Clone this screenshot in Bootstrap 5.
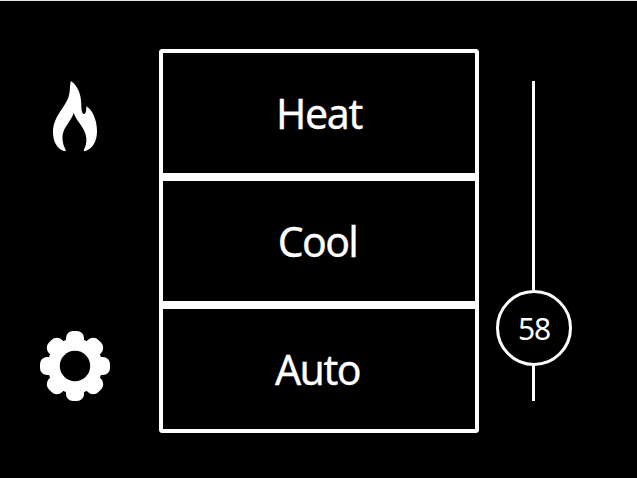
<!DOCTYPE html>
<html lang="en">
<head>
<meta charset="utf-8">
<meta name="viewport" content="width=device-width, initial-scale=1">
<title>Thermostat</title>
<link href="https://cdn.jsdelivr.net/npm/bootstrap@5.3.0/dist/css/bootstrap.min.css" rel="stylesheet">
<style>
  body { background: #000; font-family: "Noto Sans", sans-serif; }
  .panel { height: 478px; border-top: 1px solid #e4e4e4; }
  .side { width: 159px; padding: 80px 49px 77px 40px; }
  .side svg { display: block; }
  .modes { width: 320px; height: 384px; margin-top: 48px; background: #fff; border-radius: 4px; }
  .mode { height: 128px; border: 4px solid #fff; border-radius: 4px; color: #fff; font-size: 41px; line-height: 1; padding: 1px 0 0; background: #000; -webkit-text-stroke: .3px #fff; }
  .mode:hover { color: #fff; border-color: #fff; }
  .heat { letter-spacing: -1.3px; }
  .cool { letter-spacing: -1.700px; padding-right: 3px; }
  .auto { letter-spacing: -1.500px; padding-right: 3px; }
  .slider { width: 76px; margin-left: 17px; padding-top: 80px; }
  .upper { width: 3px; height: 209px; margin-right: 1px; background: #fff; }
  .lower { width: 3px; height: 35px; margin-right: 1px; background: #fff; }
  .knob { width: 76px; height: 76px; padding-top: 2px; border: 3px solid #fff; font-size: 30px; line-height: 1; letter-spacing: -1.200px; }
</style>
</head>
<body class="overflow-hidden">
<main class="panel d-flex align-items-start text-white">
  <div class="side h-100 d-flex flex-column justify-content-between">
    <svg width="70" height="72" viewBox="0 0 70 72" fill="#fff" role="img" aria-label="Heating">
      <path d="M31 0C37 4 41 12 41.3 23C41.3 29 42 33 44 33C46 33 46.5 29 46.3 25.3C52 28 57 39 57 50C57 60 53 67.500 45.500 70C43.500 70.500 43.500 69.500 44.500 67.500C49 58 45 49 39 41.500C36.500 38 34.800 35 33.700 32C32.500 36 29 41 26 45.500C21.500 52 21.500 60 25 67.500C26 69.500 26 70.500 24 70C17 67.500 13 61 13 51C13 36 24 28 28.500 16C30.500 10 29.500 4 31 0Z"/>
    </svg>
    <svg width="70" height="70" viewBox="-35 -35 70 70" fill="#fff" role="img" aria-label="Settings">
      <circle r="27.500"/>
      <rect x="-9" y="-35" width="18" height="70" rx="7"/>
      <rect x="-9.300" y="-35" width="18.600" height="70" rx="7.500" transform="rotate(45)"/>
      <rect x="-9" y="-35" width="18" height="70" rx="7" transform="rotate(90)"/>
      <rect x="-9.300" y="-35" width="18.600" height="70" rx="7.500" transform="rotate(135)"/>
      <circle r="15.200" fill="#000"/>
    </svg>
  </div>
  <div class="modes d-flex flex-column">
    <button class="mode heat btn" type="button">Heat</button>
    <button class="mode cool btn" type="button">Cool</button>
    <button class="mode auto btn" type="button">Auto</button>
  </div>
  <div class="slider d-flex flex-column align-items-center">
    <div class="upper"></div>
    <div class="knob rounded-circle d-flex align-items-center justify-content-center flex-shrink-0">58</div>
    <div class="lower"></div>
  </div>
</main>
<script src="https://cdn.jsdelivr.net/npm/bootstrap@5.3.0/dist/js/bootstrap.bundle.min.js"></script>
</body>
</html>
